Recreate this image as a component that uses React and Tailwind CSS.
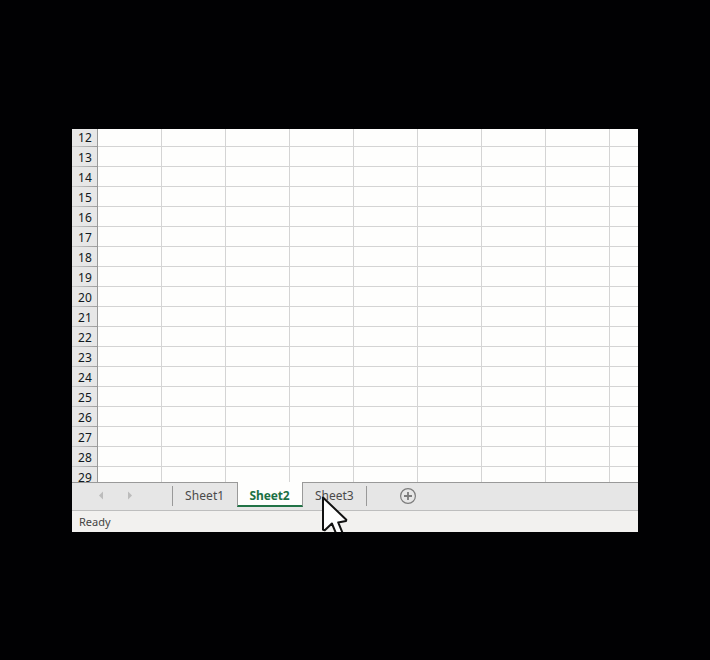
const rows = Array.from({ length: 18 }, (_, i) => i + 12);
const columns = Array.from({ length: 9 }, (_, i) => i);

function Row({ number }) {
  return (
    <div className={`flex shrink-0 ${number === 12 ? "h-[18px]" : "h-5"}`}>
      <div className="flex w-[26px] shrink-0 flex-col justify-end border-r border-r-[#999] bg-[#e7e7e7] text-center text-[12px] leading-none text-[#101820]">
        <div className="mb-0.5 pl-px tracking-[0.1px]">{number}</div>
        <div className="h-px shrink-0 bg-linear-to-r from-[#cfcfcf] to-[#9b9b9b]" />
      </div>
      {columns.map((c) => (
        <div key={c} className="w-16 shrink-0 border-r border-b border-[#d4d4d4]" />
      ))}
    </div>
  );
}

function Pointer() {
  return (
    <svg className="absolute top-[366px] left-[248px]" width="30" height="37" viewBox="0 0 30 37">
      <path
        d="M3 2.5V34.8L4.8 35.3L11.9 28.5L16.3 39H23L18.2 27.4L26 25.9L26.3 24.7Z"
        fill="#fefefe"
        stroke="#111"
        strokeWidth="2"
        strokeLinejoin="round"
      />
    </svg>
  );
}

export default function App() {
  return (
    <div className="flex h-[660px] w-[710px] items-start bg-[#010103] pt-[129px] pl-[72px] font-['Noto_Sans',sans-serif]">
      <div className="relative flex h-[403px] w-[566px] flex-col overflow-hidden bg-[#fefefd]">
        <div className="h-[353px] shrink-0 overflow-hidden">
          {rows.map((n) => (
            <Row key={n} number={n} />
          ))}
        </div>
        <div className="flex h-[29px] shrink-0 items-start border-b border-[#bebebe] bg-[#e6e6e6] text-[12px] text-[#4a4a4a]">
          <div className="flex h-full w-[165px] shrink-0 border-t border-[#999]">
            <svg className="mt-2 ml-[26px]" width="36" height="9" viewBox="0 0 36 9" fill="#bcbcbc">
              <path d="M5 0.5V8.5L1 4.5ZM30 0.5V8.5L34 4.5Z" />
            </svg>
            <div className="mt-[3px] ml-[38px] h-5 w-px bg-[#999]" />
            <div className="ml-3 h-6 leading-[25px] tracking-[0.1px]">Sheet1</div>
          </div>
          <div className="h-[25px] w-[66px] shrink-0 border-x border-b-2 border-x-[#999] border-b-[#217346] bg-[#fefefd] pr-px text-center leading-[27px] font-bold tracking-[-0.15px] text-[#1c7044]">
            Sheet2
          </div>
          <div className="flex h-full grow border-t border-[#999]">
            <div className="ml-3 w-[51px] leading-[25px]">Sheet3</div>
            <div className="mt-[3px] h-5 w-px bg-[#999]" />
            <svg className="mt-[4px] ml-[32px]" width="18" height="18" viewBox="0 0 18 18" fill="none" stroke="#7c7c7c">
              <circle cx="9" cy="9" r="7.4" strokeWidth="1.2" />
              <path d="M9 5V13M5 9H13" strokeWidth="1.8" />
            </svg>
          </div>
        </div>
        <div className="grow bg-[#f2f1ef] pl-[7px] text-[11px] leading-[22px] text-[#444]">Ready</div>
        <Pointer />
      </div>
    </div>
  );
}
